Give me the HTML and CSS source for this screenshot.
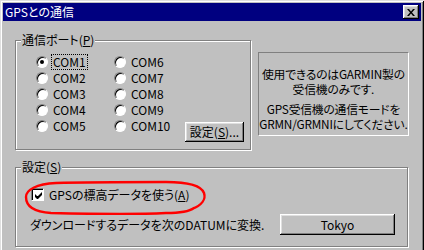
FILE: index.html
```html
<!DOCTYPE html>
<html lang="ja">
<head>
<meta charset="utf-8">
<link rel="stylesheet" href="styles.css">
</head>
<body>
<div class="window">
  <div class="titlebar">
    <span class="title">GPSとの通信</span>
    <span class="close"><svg width="8" height="7" viewBox="0 0 8 7"><path d="M0 0h2l2 2.5 2-2.5h2l-3 3.5 3 3.5h-2l-2-2.5-2 2.5h-2l3-3.5z" fill="#000"/></svg></span>
  </div>
  <div class="content">
    <div class="top-row">
      <fieldset class="group port">
        <legend>通信ポート(<u>P</u>)</legend>
        <div class="ports">
          <span class="radio-item"><span class="radio checked"></span><span class="rlabel focus">COM1</span></span>
          <span class="radio-item"><span class="radio"></span><span class="rlabel">COM2</span></span>
          <span class="radio-item"><span class="radio"></span><span class="rlabel">COM3</span></span>
          <span class="radio-item"><span class="radio"></span><span class="rlabel">COM4</span></span>
          <span class="radio-item"><span class="radio"></span><span class="rlabel">COM5</span></span>
          <span class="radio-item"><span class="radio"></span><span class="rlabel">COM6</span></span>
          <span class="radio-item"><span class="radio"></span><span class="rlabel">COM7</span></span>
          <span class="radio-item"><span class="radio"></span><span class="rlabel">COM8</span></span>
          <span class="radio-item"><span class="radio"></span><span class="rlabel">COM9</span></span>
          <span class="radio-item"><span class="radio"></span><span class="rlabel">COM10</span></span>
          <span class="btn setup">設定(<u>S</u>)...</span>
        </div>
      </fieldset>
      <div class="info">
        <p>使用できるのはGARMIN製の<br>受信機のみです.</p>
        <p>GPS受信機の通信モードを<br>GRMN/GRMNIにしてください.</p>
      </div>
    </div>
    <fieldset class="group settings">
      <legend>設定(<u>S</u>)</legend>
      <div class="settings-body">
        <div class="check-row">
          <span class="checkbox"><svg width="7" height="7" viewBox="0 0 7 7"><path d="M0 2v3l2 2h1l4-4v-3l-4 4h-1z" fill="#000"/></svg></span>
          <span class="clabel">GPSの標高データを使う(<u>A</u>)</span>
        </div>
        <div class="datum-row">
          <span class="datum-text">ダウンロードするデータを次のDATUMに変換.</span>
          <span class="btn tokyo">Tokyo</span>
        </div>
      </div>
      <svg class="annot" width="200" height="50" viewBox="0 0 200 50">
        <path d="M176 36 C186 32 190 26 188 20 C185 12 170 9 150 9 C110 9 70 9 40 10 C20 11 10 17 10 24 C10 33 18 39 35 40 C80 41 130 41 150 40 C165 40 174 38 178 35" fill="none" stroke="#ff0000" stroke-width="2.4" stroke-linecap="round"/>
      </svg>
    </fieldset>
  </div>
</div>
</body>
</html>
```

FILE: styles.css
```css
html, body {
  margin: 0;
  padding: 0;
  overflow: hidden;
  background: #c0c0c0;
}

body {
  font: 12px/12px "Noto Sans CJK JP", sans-serif;
  font-feature-settings: "palt";
  color: #000;
}

.window {
  width: 424px;
  height: 262px;
  box-sizing: border-box;
  padding: 3px;
  background: #c0c0c0;
  box-shadow: inset 1px 1px 0 #dfdfdf, inset -1px -1px 0 #000, inset 2px 2px 0 #fff, inset -2px -2px 0 #808080;
}

.titlebar {
  height: 18px;
  background: #000080;
  display: flex;
  align-items: center;
  justify-content: space-between;
  padding: 0 2px;
}

.title {
  color: #fff;
  font-size: 12px;
  line-height: 14px;
}

.close {
  width: 16px;
  height: 14px;
  box-sizing: border-box;
  background: #c0c0c0;
  display: flex;
  align-items: center;
  justify-content: center;
  box-shadow: inset -1px -1px 0 #000, inset 1px 1px 0 #fff, inset -2px -2px 0 #808080, inset 2px 2px 0 #dfdfdf;
}

.content {
  padding: 13px 12px 0 12px;
}

.top-row {
  display: flex;
  align-items: flex-start;
}

.group {
  margin: 0;
  padding: 0;
  border: 1px solid #808080;
  box-shadow: 1px 1px 0 #fff, inset 1px 1px 0 #fff;
  box-sizing: border-box;
  min-width: 0;
}

.group legend {
  padding: 0 1px;
  margin-left: 5px;
  background: #c0c0c0;
  line-height: 12px;
}

.port {
  width: 237px;
  padding: 8px 0 15px 0;
}

.ports {
  display: grid;
  grid-template-columns: 78px 71px 58px;
  grid-template-rows: repeat(5, 16px);
  grid-auto-flow: column;
  padding-left: 20px;
}

.radio-item {
  display: flex;
  align-items: center;
  height: 16px;
}

.radio {
  width: 12px;
  height: 12px;
  box-sizing: border-box;
  border-radius: 50%;
  border: 1px solid;
  border-color: #808080 #fff #fff #808080;
  background: #fff;
  box-shadow: inset 1px 1px 0 #000;
  margin-right: 4px;
  display: flex;
  align-items: center;
  justify-content: center;
  flex: none;
}

.radio.checked::after {
  content: "";
  width: 4px;
  height: 4px;
  border-radius: 50%;
  background: #000;
}

.rlabel {
  padding: 1px 1px;
  line-height: 12px;
}

.rlabel.focus {
  outline: 1px dotted #000;
  outline-offset: 0;
}

.btn {
  display: flex;
  align-items: center;
  justify-content: center;
  background: #c0c0c0;
  box-shadow: inset -1px -1px 0 #000, inset 1px 1px 0 #fff, inset -2px -2px 0 #808080, inset 2px 2px 0 #dfdfdf;
  box-sizing: border-box;
}

.setup {
  grid-column: 3;
  grid-row: 5;
  width: 59px;
  height: 20px;
  margin-top: 4px;
}

.info {
  margin: 18px 0 0 7px;
  width: 152px;
  height: 84px;
  box-sizing: border-box;
  border: 1px solid;
  border-color: #808080 #fff #fff #808080;
  text-align: center;
  padding-top: 13px;
  font-size: 11.8px;
  letter-spacing: -0.2px;
}

.info p {
  margin: 0 -4px 5px -4px;
  line-height: 15px;
  white-space: nowrap;
}

.settings {
  position: relative;
  width: 393px;
  margin-top: 11px;
}

.settings-body {
  padding: 15px 12px 11px 14px;
}

.check-row {
  display: flex;
  align-items: center;
  height: 13px;
}

.checkbox {
  width: 13px;
  height: 13px;
  margin-left: 1px;
  margin-right: 5px;
  box-sizing: border-box;
  border: 1px solid;
  border-color: #808080 #fff #fff #808080;
  background: #fff;
  box-shadow: inset 1px 1px 0 #000;
  display: flex;
  align-items: center;
  justify-content: center;
  padding: 1px 0 0 1px;
}

.datum-row {
  display: flex;
  align-items: center;
  justify-content: space-between;
  margin-top: 13px;
}

.tokyo {
  width: 115px;
  height: 21px;
}

.annot {
  position: absolute;
  left: 0;
  top: 0;
  pointer-events: none;
}
```
